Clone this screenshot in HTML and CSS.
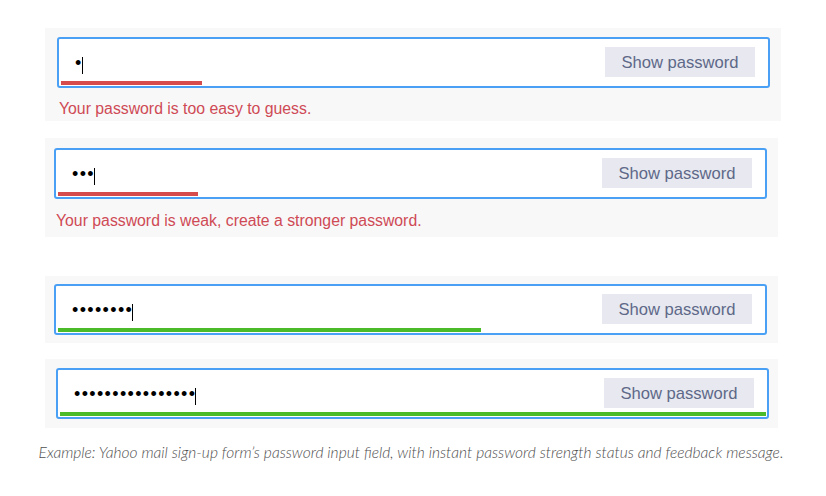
FILE: index.html
```html
<!DOCTYPE html>
<html lang="en">
<head>
<meta charset="utf-8">
<title>Password strength</title>
<link rel="stylesheet" href="styles.css">
</head>
<body>
<main class="page">
  <section class="panel panel-1">
    <div class="field">
      <div class="field-row">
        <span class="pw">•</span><span class="caret"></span>
        <button class="show" type="button">Show password</button>
      </div>
      <div class="meter meter-weak" style="width:141px"></div>
    </div>
    <p class="msg">Your password is too easy to guess.</p>
  </section>

  <section class="panel panel-2">
    <div class="field">
      <div class="field-row">
        <span class="pw">•••</span><span class="caret"></span>
        <button class="show" type="button">Show password</button>
      </div>
      <div class="meter meter-weak" style="width:140px"></div>
    </div>
    <p class="msg">Your password is weak, create a stronger password.</p>
  </section>

  <section class="panel panel-3">
    <div class="field">
      <div class="field-row">
        <span class="pw">••••••••</span><span class="caret"></span>
        <button class="show" type="button">Show password</button>
      </div>
      <div class="meter meter-strong" style="width:423px"></div>
    </div>
  </section>

  <section class="panel panel-4">
    <div class="field">
      <div class="field-row">
        <span class="pw">••••••••••••••••</span><span class="caret"></span>
        <button class="show" type="button">Show password</button>
      </div>
      <div class="meter meter-strong" style="width:706px"></div>
    </div>
  </section>

  <p class="caption">Example: Yahoo mail sign-up form’s password input field, with instant password strength status and feedback message.</p>
</main>
</body>
</html>
```

FILE: styles.css
```css
html, body {
  margin: 0;
  padding: 0;
  background: #ffffff;
}

.page {
  padding-top: 28px;
  font-family: "Liberation Sans", Arial, sans-serif;
}

.panel {
  background: #f8f8f8;
  margin-left: 45px;
  width: 733px;
  box-sizing: border-box;
}

.panel-1 {
  width: 736px;
  padding: 9px 0 2px 12px;
}

.panel-2 {
  margin-top: 17px;
  padding: 10px 0 6px 9px;
}

.panel-3 {
  margin-top: 39px;
  padding: 8px 0 8px 9px;
}

.panel-4 {
  margin-top: 16px;
  padding: 9px 0 9px 11px;
}

.field {
  width: 713px;
  height: 51px;
  box-sizing: border-box;
  border: 2px solid #4aa0f5;
  border-radius: 3px;
  background: #ffffff;
  display: flex;
  flex-direction: column;
}

.field-row {
  display: flex;
  align-items: center;
  padding: 8px 13px 0 16px;
  height: 30px;
}

.pw {
  font-family: "Liberation Sans", Arial, sans-serif;
  font-size: 18px;
  letter-spacing: 1.35px;
  color: #000000;
  line-height: 30px;
  margin-top: 1px;
}

.caret {
  width: 1px;
  height: 17px;
  background: #000000;
  margin-left: -1px;
  margin-top: 7px;
}

.show {
  margin-left: auto;
  width: 150px;
  height: 30px;
  border: 0;
  border-radius: 0;
  background: #e7e8f0;
  color: #5e6888;
  font-family: "Liberation Sans", Arial, sans-serif;
  font-size: 16.6px;
  padding: 2px 0 0 0;
}

.meter {
  height: 4px;
  margin: 4px 0 0 2px;
}

.meter-weak {
  background: #d64b4b;
}

.meter-strong {
  background: #4cbb2a;
}

.msg {
  margin: 11px 0 0 2px;
  font-size: 15.8px;
  line-height: 20px;
  color: #cf4a55;
}

.panel-2 .msg {
  margin-top: 12px;
}

.caption {
  margin: 15px 0 0 0;
  text-align: center;
  width: 822px;
  font-family: Lato, "Open Sans", sans-serif;
  font-style: italic;
  font-weight: 300;
  font-size: 15.55px;
  line-height: 18px;
  color: #4f4f4f;
}
```
